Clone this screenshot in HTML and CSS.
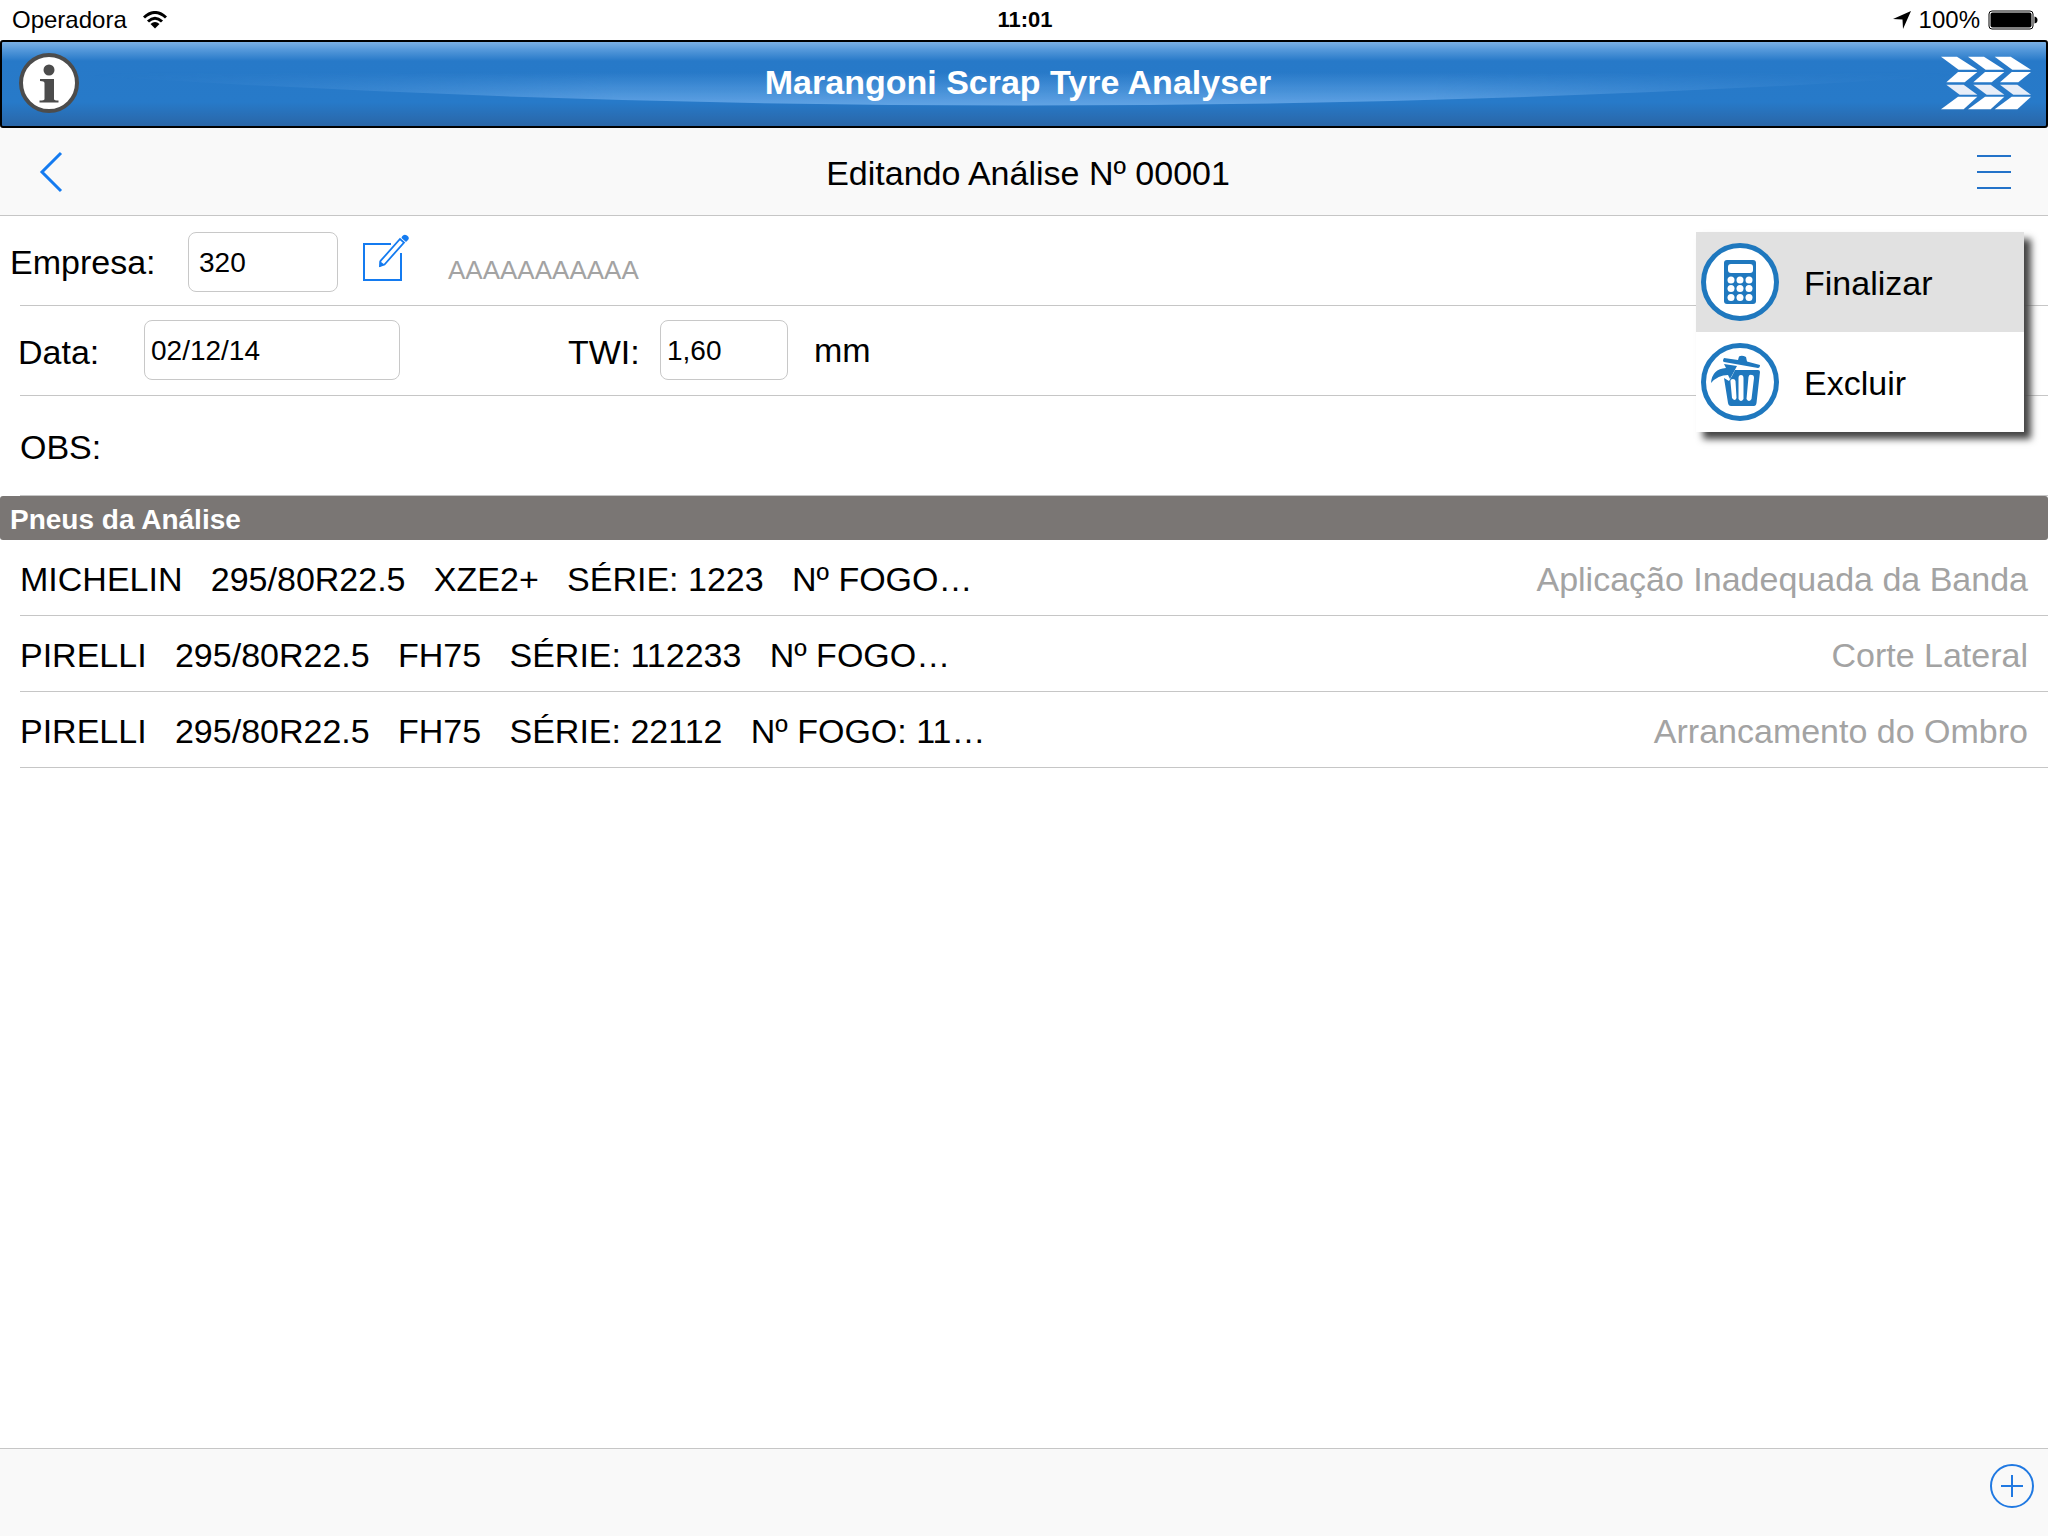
FILE: index.html
```html
<!DOCTYPE html>
<html lang="pt-BR">
<head>
<meta charset="utf-8">
<meta name="viewport" content="width=device-width, initial-scale=1">
<title>Marangoni Scrap Tyre Analyser</title>
<link rel="stylesheet" href="styles.css">
</head>
<body>
<div class="status">
  <div class="status-side">
    <span>Operadora</span>
    <svg class="wifi" width="24" height="18" viewBox="0 0 24 18" fill="none" stroke="#000" stroke-width="3" aria-hidden="true">
      <path d="M1 6.500Q12-3.500 23 6.500"/>
      <path d="M5 10.500Q12 4 19 10.500"/>
      <path d="M7.500 13Q12 9 16.500 13L12 17.500Z" fill="#000" stroke="none"/>
    </svg>
  </div>
  <span class="clock">11:01</span>
  <div class="status-side status-right">
    <svg width="18" height="18" viewBox="0 0 18 18" aria-hidden="true"><path d="M18 0L10 18L9.500 8.500L0 8Z"/></svg>
    <span>100%</span>
    <svg width="50" height="20" viewBox="0 0 50 20" aria-hidden="true">
      <rect x="1" y="1" width="44" height="18" rx="3" fill="#fff" stroke="#000"/>
      <rect x="2.500" y="2.500" width="41" height="15" rx="2"/>
      <path d="M46.500 6.500Q49.500 7 49.500 10T46.500 13.500Z"/>
    </svg>
  </div>
</div>

<header class="banner">
  <svg class="gloss" viewBox="0 0 100 84" preserveAspectRatio="none" aria-hidden="true">
    <defs>
      <linearGradient id="gloss" gradientUnits="userSpaceOnUse" x1="0" y1="30" x2="0" y2="64">
        <stop offset="0" stop-color="#65a6e6" stop-opacity="0"/>
        <stop offset="1" stop-color="#65a6e6" stop-opacity=".95"/>
      </linearGradient>
    </defs>
    <path d="M0 0V28Q50 99 100 28V0Z" fill="url(#gloss)"/>
  </svg>
  <button class="icon-button" type="button" aria-label="Informações">
    <svg width="60" height="60" viewBox="0 0 60 60">
      <circle cx="30" cy="30" r="28" fill="#fff" stroke="#4c4c4c" stroke-width="4"/>
      <circle cx="30" cy="17" r="5.500" fill="#4c4c4c"/>
      <path d="M21 26H35V46Q35 47.500 39.500 47.500V49.500H20.500V47.500Q25.500 47.500 25.500 46V30Q25.500 28 21 28Z" fill="#4c4c4c"/>
    </svg>
  </button>
  <h1 class="banner-title">Marangoni Scrap Tyre Analyser</h1>
  <svg class="logo" width="90" height="54" viewBox="279 169 270 160" fill="#fff" aria-hidden="true">
    <defs>
      <g id="tread">
        <path d="M279 170H327L388 209H332Z"/>
        <path d="M330 216H388L350 247H295Z"/>
        <path d="M295 254H347L388 284H335Z" fill="#e8eef8"/>
        <path d="M330 290H388L347 328H279Z"/>
      </g>
    </defs>
    <use href="#tread"/><use href="#tread" x="81"/><use href="#tread" x="161"/>
  </svg>
</header>

<nav class="navbar">
  <button class="icon-button" type="button" aria-label="Voltar">
    <svg width="24" height="42" viewBox="0 0 24 42" fill="none" stroke="#147bf0" stroke-width="3"><path d="M22 2L3 21L22 40"/></svg>
  </button>
  <h2 class="navbar-title">Editando Análise Nº 00001</h2>
  <button class="icon-button" type="button" aria-label="Menu">
    <svg width="34" height="34" viewBox="0 0 34 34" stroke="#2373c9" stroke-width="2"><path d="M0 1H34M0 17H34M0 33H34"/></svg>
  </button>
</nav>

<main class="content">
  <form class="form">
    <div class="row row-company">
      <label class="label-company" for="empresa">Empresa:</label>
      <input class="field field-company" id="empresa" type="text" value="320">
      <button class="icon-button edit" type="button" aria-label="Editar empresa">
        <svg width="48" height="48" viewBox="0 0 48 48" fill="none" stroke="#147bf0" stroke-width="2">
          <path d="M29 10H2V46H39V19"/>
          <path d="M18 32L18.500 27L38 5L42 8.500L22.500 30.500Z" stroke-width="1.800"/>
          <path d="M17.500 33V27L22.500 30.500Z" fill="#147bf0" stroke="none"/>
          <path d="M40 2.500Q42-.5 45 1.500T46 6L44 8L39.500 4Z" fill="#147bf0" stroke="none"/>
        </svg>
      </button>
      <output class="company-name">AAAAAAAAAAA</output>
    </div>
    <div class="row row-date">
      <label class="label-date" for="data">Data:</label>
      <input class="field field-date" id="data" type="text" value="02/12/14">
      <label class="label-twi" for="twi">TWI:</label>
      <input class="field field-twi" id="twi" type="text" value="1,60">
      <span class="unit">mm</span>
    </div>
    <div class="row row-notes">
      <label for="obs">OBS:</label>
      <input class="notes" id="obs" type="text">
    </div>
  </form>

  <h3 class="section">Pneus da Análise</h3>
  <table class="tyres">
    <tbody>
      <tr><td class="tyre">MICHELIN   295/80R22.5   XZE2+   SÉRIE: 1223   Nº FOGO…</td><td class="damage">Aplicação Inadequada da Banda</td></tr>
      <tr><td class="tyre">PIRELLI   295/80R22.5   FH75   SÉRIE: 112233   Nº FOGO…</td><td class="damage">Corte Lateral</td></tr>
      <tr><td class="tyre">PIRELLI   295/80R22.5   FH75   SÉRIE: 22112   Nº FOGO: 11…</td><td class="damage">Arrancamento do Ombro</td></tr>
    </tbody>
  </table>

  <div class="menu">
    <button class="menu-item menu-item-active" type="button">
      <svg width="78" height="78" viewBox="0 0 78 78" aria-hidden="true">
        <circle cx="39" cy="39" r="36.500" fill="#fff" stroke="#1f78be" stroke-width="5"/>
        <rect x="23" y="17" width="32" height="44" rx="3" fill="#1f78be"/>
        <rect x="27" y="21" width="25" height="9" rx="3" fill="#fff"/>
        <g fill="#fff">
          <circle cx="30" cy="37" r="3.500"/><circle cx="39" cy="37" r="3.500"/><circle cx="48" cy="37" r="3.500"/>
          <circle cx="30" cy="45.500" r="3.500"/><circle cx="39" cy="45.500" r="3.500"/><circle cx="48" cy="45.500" r="3.500"/>
          <circle cx="30" cy="54.500" r="3.500"/><circle cx="39" cy="54.500" r="3.500"/><circle cx="48" cy="54.500" r="3.500"/>
        </g>
      </svg>
      <span>Finalizar</span>
    </button>
    <button class="menu-item" type="button">
      <svg width="78" height="78" viewBox="0 0 78 78" aria-hidden="true">
        <circle cx="39" cy="39" r="36.500" fill="#fff" stroke="#1f78be" stroke-width="5"/>
        <g fill="#1f78be">
          <path d="M23 15Q21 18 23 19L57 25Q59 25 59 22L46 18.500L45 14Q41 12 38 13.500L37 17Z"/>
          <path d="M10 40Q11 26 25 25L23 21L36 23L29 36L27 32Q17 32 10 40Z"/>
          <path fill-rule="evenodd" d="M34 27H57Q59 27 59 29L55.500 60Q55 63 53 63H30Q27.500 63 27 60L23 35L28 38L31 33ZM32 36Q29 36 29.500 39L31 55Q34 59 35.500 55L34.500 38Q34 36 32 36ZM40 32Q37.500 32 37.500 35V56Q40 60 42.500 56V35Q42.500 32 40 32ZM51 32Q48 31 47.500 34L45.500 56Q48 60 50.500 56L53 35Q53 32 51 32Z"/>
        </g>
      </svg>
      <span>Excluir</span>
    </button>
  </div>
</main>

<footer class="toolbar">
  <button class="icon-button" type="button" aria-label="Adicionar pneu">
    <svg width="44" height="44" viewBox="0 0 44 44" fill="none" stroke="#2079e2" stroke-width="2"><circle cx="22" cy="22" r="21"/><path d="M22 11V33M11 22H33"/></svg>
  </button>
</footer>
</body>
</html>
```
FILE: styles.css
```css
* {
  box-sizing: border-box;
}

body {
  margin: 0;
  min-height: 100vh;
  display: flex;
  flex-direction: column;
  background: #fff;
  color: #000;
  font: 34px/40px "Liberation Sans", Arial, sans-serif;
}

button,
input {
  margin: 0;
  border: 0;
  padding: 0;
  background: none;
  color: inherit;
  font: inherit;
}

svg {
  display: block;
  flex: none;
}

h1,
h2,
h3 {
  margin: 0;
}

.icon-button {
  display: block;
  cursor: pointer;
}

.status {
  display: grid;
  grid-template-columns: 1fr auto 1fr;
  align-items: center;
  height: 40px;
  padding: 0 10px 0 12px;
  font-size: 24px;
}

.status-side {
  display: flex;
  align-items: center;
  gap: 16px;
}

.status-right {
  justify-content: flex-end;
  gap: 8px;
}

.clock {
  font-size: 22px;
  font-weight: bold;
}

.banner {
  position: relative;
  display: grid;
  grid-template-columns: 90px 1fr 90px;
  align-items: center;
  height: 88px;
  padding: 0 15px 2px 17px;
  border: 2px solid #000;
  border-radius: 3px;
  background: linear-gradient(#7bb1e5 0, #5498da 8px, #2779c8 19px, #277ac9 60px, #2a66a7 84px);
  color: #fff;
}

.gloss {
  position: absolute;
  inset: 0;
  width: 100%;
  height: 100%;
  mask-image: linear-gradient(90deg, transparent 4%, #000 30%, #000 70%, transparent 96%);
}

.banner .icon-button,
.banner-title,
.logo {
  position: relative;
}

.banner .icon-button {
  justify-self: start;
}

.banner-title {
  padding: 0 14px 2px 0;
  font-size: 34px;
  text-align: center;
}

.navbar {
  display: grid;
  grid-template-columns: 34px 1fr 34px;
  align-items: center;
  height: 88px;
  padding: 0 37px 0 39px;
  border-bottom: 1px solid #c6c6c6;
  background: #f9f9f9;
}

.navbar-title {
  padding: 2px 0 0 6px;
  font-size: 34px;
  font-weight: normal;
  text-align: center;
}

.content {
  position: relative;
  flex: 1;
}

.row {
  display: flex;
  align-items: center;
  height: 90px;
  background: linear-gradient(#c6c6c6, #c6c6c6) 20px 100% / 100% 1px no-repeat;
}

.row-company {
  padding: 2px 0 0 10px;
}

.row-date {
  padding: 0 0 2px 18px;
}

.row-notes {
  height: 100px;
  padding: 2px 0 0 20px;
}

.label-company {
  width: 178px;
}

.label-date,
.label-twi {
  padding-top: 4px;
}

.label-date {
  width: 126px;
}

.label-twi {
  width: 92px;
  margin-left: 168px;
}

.field {
  height: 60px;
  padding: 2px 6px 0;
  border: 1px solid #c8c8c8;
  border-radius: 8px;
  background: #fff;
  font-size: 28px;
}

.field-company {
  width: 150px;
  padding-left: 10px;
}

.field-date {
  width: 256px;
}

.field-twi {
  width: 128px;
}

.edit {
  margin-left: 24px;
  padding-bottom: 8px;
}

.company-name {
  margin-left: 38px;
  padding-top: 16px;
  color: #a3a3a3;
  font-size: 26px;
}

.unit {
  margin-left: 26px;
}

.notes {
  flex: 1;
  margin-left: 16px;
}

.section {
  height: 44px;
  padding: 0 10px;
  border-radius: 3px;
  background: #7a7674;
  color: #fff;
  font-size: 28px;
  line-height: 48px;
}

.tyres {
  width: calc(100% - 20px);
  margin-left: 20px;
  border-spacing: 0;
}

.tyres td {
  height: 76px;
  padding: 2px 0 0;
  border-bottom: 1px solid #c6c6c6;
}

.tyre {
  white-space: pre;
}

.tyres .damage {
  padding-right: 20px;
  color: #a3a3a3;
  text-align: right;
}

.menu {
  position: absolute;
  top: 16px;
  right: 24px;
  width: 328px;
  background: #fff;
  box-shadow: 7px 7px 7px #444;
}

.menu-item {
  display: flex;
  align-items: center;
  gap: 25px;
  width: 100%;
  height: 100px;
  padding-left: 5px;
  text-align: left;
  cursor: pointer;
}

.menu-item span {
  padding-top: 2px;
}

.menu-item-active {
  background: #e1e1e1;
}

.toolbar {
  display: flex;
  align-items: center;
  justify-content: flex-end;
  height: 88px;
  padding: 0 14px 14px;
  border-top: 1px solid #c6c6c6;
  background: #f9f9f9;
}
```
